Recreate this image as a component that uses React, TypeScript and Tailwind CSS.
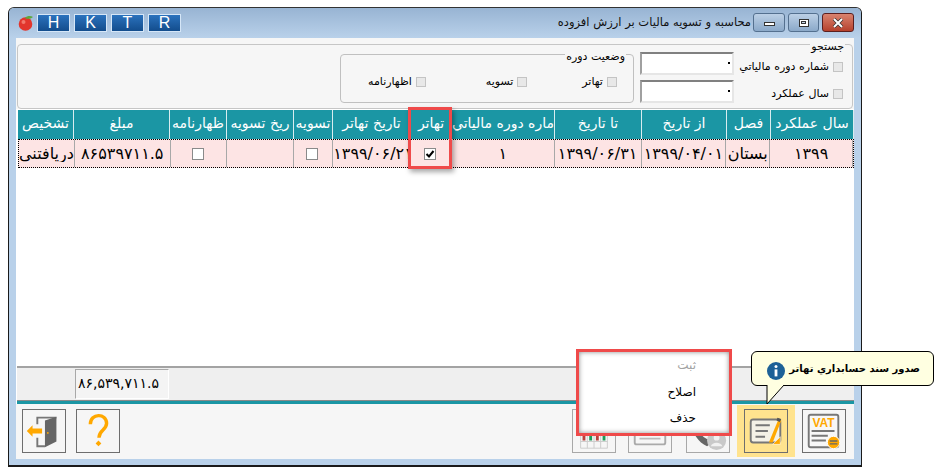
const FONT = "font-['DejaVu_Sans',sans-serif]";

const columns = [
  { width: 'w-[56px]', title: 'تشخيص', value: 'دريافتني' },
  { width: 'w-[96px]', title: 'مبلغ', value: '۸۶۵۳۹۷۱۱.۵', digits: true },
  { width: 'w-[57px]', title: 'ظهارنامه', check: 'off' },
  { width: 'w-[67px]', title: 'ريخ تسويه', value: '' },
  { width: 'w-[39px]', title: 'تسويه', check: 'off' },
  { width: 'w-[78px]', title: 'تاريخ تهاتر', value: '۱۳۹۹/۰۶/۲۱', digits: true },
  { width: 'w-[41px]', title: 'تهاتر', check: 'on' },
  { width: 'w-[103px]', title: 'ماره دوره مالياتي', value: '۱', digits: true },
  { width: 'w-[87px]', title: 'تا تاريخ', value: '۱۳۹۹/۰۶/۳۱', digits: true },
  { width: 'w-[85px]', title: 'از تاريخ', value: '۱۳۹۹/۰۴/۰۱', digits: true },
  { width: 'w-[44px]', title: 'فصل', value: 'بستان' },
  { width: 'w-[83px]', title: 'سال عملكرد', value: '۱۳۹۹', digits: true },
];

function SmallCheck({ label, className }: { label: string; className?: string }) {
  return (
    <div className={`flex items-center gap-[4px] text-[11px] leading-none text-black ${className ?? ''}`}>
      <span dir="rtl">{label}</span>
      <span className="h-[10px] w-[10px] border border-[#c4c4c4] bg-[#e8e8e8]" />
    </div>
  );
}

function DotInput() {
  return (
    <div className="flex h-[23px] w-[94px] items-center justify-end border-2 border-b-[#e6e6e6] border-l-[#a0a0a0] border-r-[#e6e6e6] border-t-[#808080] bg-white pr-[2px] text-[11px] leading-none">
      <span className="mb-[2px] h-[2px] w-[2px] bg-black" />
    </div>
  );
}

function WinButton({ width, className, children }: { width: string; className: string; children: React.ReactNode }) {
  return (
    <div className={`flex h-[19px] items-center justify-center rounded-[3px] border ${width} ${className}`}>
      {children}
    </div>
  );
}

function Tool({ children, className }: { children: React.ReactNode; className?: string }) {
  return (
    <div className={`h-[44px] w-[44px] shrink-0 border border-[#6e6e6e] ${className ?? ''}`}>
      <svg viewBox="0 0 44 44" className="h-full w-full">
        {children}
      </svg>
    </div>
  );
}

export default function App() {
  return (
    <div className={`relative h-[471px] w-[944px] overflow-hidden bg-white pl-[8px] pt-[7px] ${FONT}`}>
      {/* Window */}
      <div className="flex h-[460px] w-[854px] flex-col rounded-t-[6px] border border-b-2 border-[#1a1a1a] border-t-[#333] bg-[#b9d1ea]">
        {/* Title bar */}
        <div className="flex h-[30px] shrink-0 items-center rounded-t-[5px] bg-gradient-to-b from-[#98b4d3] to-[#b9d1ea] pb-[1px] pl-[9px] pr-[7px]">
          <svg viewBox="0 0 16 16" className="h-[16px] w-[16px] shrink-0">
            <circle cx="7.5" cy="9" r="6.8" fill="#e2352c" />
            <circle cx="5.5" cy="7" r="2" fill="#f2776a" />
            <path d="M7 3 C9 0.5 13 0.5 15 2 C13 4 9 4.5 7 3Z" fill="#5da83e" />
          </svg>
          <div className="ml-[3px] flex gap-[4px]">
            {['H', 'K', 'T', 'R'].map((k) => (
              <div
                key={k}
                className="flex h-[18px] w-[33px] items-center justify-center border border-[#d5e6f7] bg-gradient-to-b from-[#2b72bd] to-[#134d8d] font-['Liberation_Sans',sans-serif] text-[16px] leading-none text-white"
              >
                {k}
              </div>
            ))}
          </div>
          <div dir="rtl" className="ml-auto mr-[2px] text-[11.5px] leading-none text-[#111]">
            محاسبه و تسويه ماليات بر ارزش افزوده
          </div>
          <div className="flex gap-[3px]">
            <WinButton width="w-[32px]" className="border-[#54708f] bg-gradient-to-b from-[#bcd0e6] to-[#8ba9c9]">
              <span className="mt-[3px] h-[4px] w-[11px] border border-[#333] bg-white" />
            </WinButton>
            <WinButton width="w-[31px]" className="border-[#54708f] bg-gradient-to-b from-[#bcd0e6] to-[#8ba9c9]">
              <span className="flex h-[8px] w-[10px] items-center justify-center border border-[#333] bg-white">
                <span className="h-[3px] w-[5px] border border-[#333] bg-[#c9d9ea]" />
              </span>
            </WinButton>
            <WinButton width="w-[32px]" className="border-[#5c1f1f] bg-gradient-to-b from-[#d9836f] to-[#b5402c]">
              <svg viewBox="0 0 14 10" className="h-[10px] w-[14px]">
                <path d="M3 1 L11 9 M11 1 L3 9" stroke="#333" strokeWidth="3.4" />
                <path d="M3 1 L11 9 M11 1 L3 9" stroke="#fff" strokeWidth="2" />
              </svg>
            </WinButton>
          </div>
        </div>

        {/* Client area */}
        <div className="mx-[7px] mb-[6px] flex min-h-0 flex-1 flex-col bg-white">
          <div className="shrink-0 bg-[#f6f6f6] pl-[1px] pr-[1px] pt-[6px]">
            {/* Search group */}
            <div className="relative flex h-[65px] items-start rounded-[4px] border border-[#c6c6c6] bg-[#f6f6f6] pl-[322px] pt-[9px]">
              <div className="relative flex h-[49px] w-[294px] items-center rounded-[4px] border border-[#c0c0c0]">
                <SmallCheck label="اظهارنامه" className="ml-[27px] mt-[6px]" />
                <SmallCheck label="تسويه" className="ml-[60px] mt-[6px]" />
                <SmallCheck label="تهاتر" className="ml-[55px] mt-[6px]" />
                <span dir="rtl" className="absolute right-[7px] top-[-5px] bg-[#f6f6f6] px-[1px] text-[11px] leading-[14px] text-black">
                  وضعيت دوره
                </span>
              </div>
              <div className="ml-[6px] mt-[-2px] flex flex-col gap-[5px]">
                <DotInput />
                <DotInput />
              </div>
              <div className="mt-[7px] flex flex-1 flex-col items-end gap-[16px] pr-[9px]">
                <SmallCheck label="شماره دوره مالياتي" />
                <SmallCheck label="سال عملكرد" />
              </div>
              <span dir="rtl" className="absolute right-[7px] top-[-5px] bg-[#f6f6f6] px-[1px] text-[11px] leading-[14px] text-black">
                جستجو
              </span>
            </div>
          </div>

          {/* Grid */}
          <div className="ml-[2px] mt-[1px] w-[836px] shrink-0">
            <div className="flex h-[29px] bg-[#1b96a4]">
              {columns.map((c) => (
                <div
                  key={c.title}
                  className={`${c.width} overflow-hidden whitespace-nowrap border-r border-[#d8ecef] text-center text-[14px] leading-[26px] text-white`}
                >
                  {c.title}
                </div>
              ))}
            </div>
            <div className="flex h-[29px] border border-dotted border-black bg-[#fde4e4]">
              {columns.map((c) => (
                <div
                  key={c.title}
                  className={`${c.width} flex items-center justify-center overflow-hidden whitespace-nowrap border-r border-[#a8a8a8] text-[16px] leading-none text-black`}
                >
                  {c.check ? (
                    <span className="mr-[2px] flex h-[12px] w-[12px] items-center justify-center border border-[#8a8a8a] bg-white">
                      {c.check === 'on' && (
                        <svg viewBox="0 0 10 10" className="h-[10px] w-[10px]">
                          <path d="M1.5 5 L4 7.5 L8.5 2" fill="none" stroke="#000" strokeWidth="2" />
                        </svg>
                      )}
                    </span>
                  ) : (
                    <span className={`block w-full overflow-hidden text-center ${c.digits ? 'tracking-[1px]' : ''}`}>{c.value}</span>
                  )}
                </div>
              ))}
            </div>
          </div>

          <div className="flex-1" />

          {/* Totals */}
          <div className="ml-[1px] flex h-[34px] w-[837px] shrink-0 border-t-2 border-[#a3a3a3] bg-[#efefef] pl-[58px] pt-[1px]">
            <div className="h-[30px] w-[94px] overflow-hidden whitespace-nowrap border border-b-white border-l-[#a8a8a8] border-r-white border-t-[#a8a8a8] bg-[#f4f4f4] pl-[2px] text-[14px] leading-[26px] tracking-[0.5px] text-black">
              ۸۶,۵۳۹,۷۱۱.۵
            </div>
          </div>
          <div className="ml-[1px] h-[4px] w-[837px] shrink-0 border-t border-[#8a8a8a] bg-[#1b96a4]" />

          {/* Toolbar */}
          <div className="flex min-h-0 flex-1 basis-[55px] grow-0 items-center bg-[#f6f6f6] pb-[1px] pl-[6px] pr-[8px]">
            <Tool>
              <path d="M35 8 H15 V15 M15 29 V38 H23" fill="none" stroke="#777" strokeWidth="2" />
              <path d="M23 11 L35 7 V33 L23 39Z" fill="#666" />
              <circle cx="26" cy="24" r="1" fill="#ffa800" />
              <path d="M4 22 L10 16 V19.5 H20 V24.5 H10 V28Z" fill="#ffa800" />
            </Tool>
            <Tool className="ml-[10px]">
              <path d="M14 15 C14 3 31 3 31 14 C31 21 23 21 23 29" fill="none" stroke="#ffa800" strokeWidth="3.6" />
              <path d="M22.5 32 L25.5 35 L22.5 38 L19.5 35Z" fill="#ffa800" />
            </Tool>
            <div className="ml-auto flex items-center">
              <Tool className="mr-[12px] border-[#a8a8a8]">
                <path d="M8 26 H36 V40 H8Z M8 33 H36 M15 26 V40 M22 26 V40 M29 26 V40" fill="none" stroke="#ccc" />
                <path d="M10 20 H13 V32 H10Z M24 20 H27 V32 H24Z" fill="#b9403b" />
                <path d="M17 20 H20 V32 H17Z M31 20 H34 V32 H31Z" fill="#1d9a59" />
              </Tool>
              <Tool className="mr-[14px] border-[#a8a8a8]">
                <rect x="6" y="8" width="32" height="28" rx="2" fill="none" stroke="#aaa" strokeWidth="2" />
                <path d="M11 24 H33 M11 30 H33" stroke="#bbb" strokeWidth="2" />
              </Tool>
              <Tool className="mr-[7px] border-[#a8a8a8]">
                <path d="M8 10 C10 24 18 31 28 33 L21 38 C12 34 5 24 4 12Z" fill="#666" />
                <circle cx="31" cy="32" r="10" fill="#c9c9c9" />
                <circle cx="31" cy="29" r="3" fill="#f1f1f1" />
                <path d="M25 38 C26 33 36 33 37 38Z" fill="#f1f1f1" />
              </Tool>
              <div className="mr-[7px] flex h-[52px] w-[58px] items-center justify-center bg-[#ffe38e]">
                <Tool>
                  <rect x="6" y="10" width="31" height="24" rx="2.5" fill="#f4f1e6" stroke="#777" strokeWidth="2" />
                  <path d="M11 16 H26 M11 22 H24 M11 28 H21" stroke="#777" strokeWidth="2" />
                  <path d="M25 34 L35 10 L38 11 L29 34Z" fill="#ffa800" />
                  <path d="M34 8 L38 9.5 L36.5 12.5 L33 11Z" fill="#555" />
                  <path d="M29 36 L37 28 V36Z" fill="#ffa800" stroke="#fff" strokeWidth="0.6" />
                </Tool>
              </div>
              <Tool>
                <rect x="6" y="5" width="31" height="34" rx="2" fill="#f7f7f7" stroke="#777" strokeWidth="2" />
                <text x="21.5" y="18" textAnchor="middle" fontFamily="Liberation Sans" fontWeight="700" fontSize="12.5" fill="#ffa800">
                  VAT
                </text>
                <path d="M9 22 H33 M9 27 H26 M9 32 H24" stroke="#777" strokeWidth="2" />
                <circle cx="32" cy="34" r="6.5" fill="#ffa800" stroke="#fff" />
                <path d="M28 32.5 H36 M28 35.5 H36" stroke="#666" strokeWidth="1.4" />
              </Tool>
            </div>
          </div>
        </div>
      </div>

      {/* Highlight on the tahator column */}
      <div className="absolute left-[408px] top-[107px] h-[62px] w-[44px] border-[3px] border-[#ef4a4a] shadow-[2px_3px_5px_rgba(0,0,0,0.35)]" />

      {/* Popup menu */}
      <div
        dir="rtl"
        className="absolute left-[576px] top-[349px] flex h-[87px] w-[156px] flex-col border-[3px] border-[#ef4a4a] bg-white pr-[33px] text-[12px] leading-none text-black shadow-[inset_0_0_5px_rgba(0,0,0,0.45)]"
      >
        <span className="mt-[7px] text-[#a3a3a3]">ثبت</span>
        <span className="mt-[15px]">اصلاح</span>
        <span className="mt-[14px]">حذف</span>
      </div>

      {/* Tooltip */}
      <div className="absolute left-[751px] top-[351px] flex h-[35px] w-[183px] items-center rounded-[6px] border border-black bg-[#ffffe1] pl-[15px] pr-[13px]">
        <svg viewBox="0 0 18 18" className="mt-[4px] h-[18px] w-[18px] shrink-0">
          <circle cx="9" cy="9" r="9" fill="#1d6197" />
          <circle cx="9" cy="4.6" r="1.5" fill="#fff" />
          <rect x="7.6" y="7.4" width="2.8" height="7" fill="#fff" />
        </svg>
        <span dir="rtl" className="ml-auto whitespace-nowrap text-[10px] font-bold leading-none text-black">
          صدور سند حسابداري تهاتر
        </span>
      </div>
      <svg viewBox="0 0 26 22" className="absolute left-[762px] top-[384px] h-[22px] w-[26px]">
        <path d="M5 1 V20 L22 1" fill="#ffffe1" stroke="#000" />
        <path d="M6 0 H21 V2 H6Z" fill="#ffffe1" />
      </svg>
    </div>
  );
}
